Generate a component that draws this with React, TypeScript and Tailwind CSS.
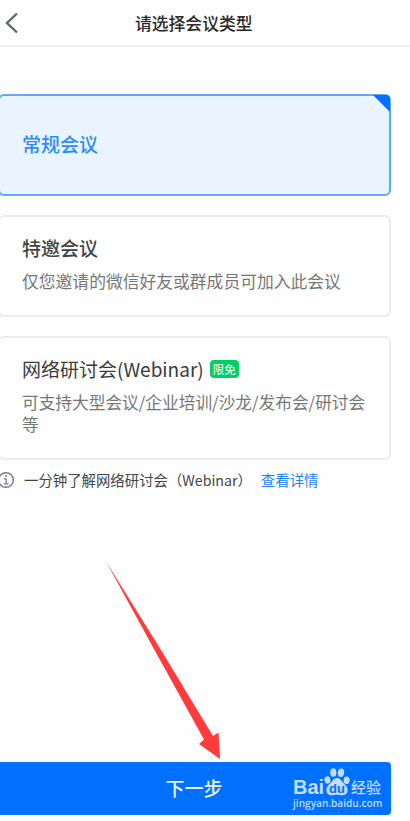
import type { ReactNode } from 'react'

function Card({ selected, className, children }: { selected?: boolean; className: string; children: ReactNode }) {
  return (
    <section
      className={`relative -ml-0.5 w-[393px] rounded-[6px] border-2 pl-[22px] ${
        selected ? 'border-[#62a9f6] bg-[#e9f4fe]' : 'border-[#ececec] bg-[#fefefe]'
      } ${className}`}
    >
      {children}
    </section>
  )
}

function Watermark() {
  return (
    <div className="absolute left-[293px] top-[4px] w-[92px] text-[#c3dcff]">
      <div className="flex h-[31px] items-end">
        <span className="w-[31px] font-['Liberation_Sans'] text-[20px] font-bold leading-[20px]">Bai</span>
        <svg width="26" height="30" viewBox="0 0 26 30" fill="#c3dcff" className="shrink-0">
          <ellipse cx="3.400" cy="13" rx="3" ry="3.700" transform="rotate(-12 3.400 13)" />
          <ellipse cx="9.300" cy="5.500" rx="3.100" ry="4.300" />
          <ellipse cx="17" cy="5.700" rx="3.100" ry="4.300" transform="rotate(10 17 5.700)" />
          <ellipse cx="22.600" cy="13.300" rx="3" ry="3.800" transform="rotate(8 22.600 13.300)" />
          <path d="M13 11c3 0 4.200 2.500 6 4.600 2.200 2.400 4.600 4 4.600 7.600 0 3.200-2.400 5-5.200 5-2 0-3.400-.5-5.400-.5s-3.400.5-5.400.5c-2.800 0-5.200-1.800-5.200-5 0-3.600 2.400-5.200 4.600-7.600C8.800 13.500 10 11 13 11z" />
          <text x="13" y="25.500" textAnchor="middle" fontSize="13" fontWeight="bold" fontFamily="Liberation Sans" fill="#0070ff">du</text>
        </svg>
        <span className="ml-px text-[15px] font-medium leading-[21px] whitespace-nowrap">经验</span>
      </div>
      <div className="font-['Open_Sans'] text-[10.100px] font-semibold leading-[12px]">jingyan.baidu.com</div>
    </div>
  )
}

export default function App() {
  return (
    <main className="relative flex h-[821px] w-[410px] flex-col overflow-hidden bg-[#fefefe] font-['Noto_Sans_CJK_SC',sans-serif] text-[#3a3a3a]">
      <header className="relative flex h-[47px] shrink-0 items-center border-b-2 border-[#f1f1f2]">
        <svg width="20" height="24" viewBox="0 0 20 24" fill="none" className="shrink-0">
          <path d="M17 2.500L7 12l10 9.500" stroke="#62666d" strokeWidth="2.400" />
        </svg>
        <h1 className="ml-[115px] mt-px text-[16.800px] font-medium leading-[24px] text-[#2a2a2a]">请选择会议类型</h1>
      </header>

      <Card selected className="mt-[47px] flex h-[102px] shrink-0 items-center">
        <h2 className="-mt-[3px] text-[19px] font-medium leading-[26px] text-[#2c8cf7]">常规会议</h2>
        <span className="absolute -right-px -top-px h-[17px] w-[17px] rounded-tr-[4px] bg-[#0070ff] [clip-path:polygon(0_0,100%_0,100%_100%)]" />
      </Card>

      <Card className="mt-[19px] h-[102px] shrink-0 pt-[18px]">
        <h2 className="text-[19px] font-medium leading-[26px] text-[#444]">特邀会议</h2>
        <p className="mt-[9px] text-[16.800px] leading-[22px] text-[#777]">仅您邀请的微信好友或群成员可加入此会议</p>
      </Card>

      <Card className="mt-[19px] h-[124px] shrink-0 pt-[18px]">
        <div className="flex items-center">
          <h2 className="text-[19px] leading-[26px]">网络研讨会(Webinar)</h2>
          <span className="ml-[6px] flex h-[18px] w-[29px] items-center justify-center rounded-[4px] bg-[#08cc68] text-[11.500px] leading-[18px] text-white">限免</span>
        </div>
        <p className="mt-[9px] text-[16.700px] leading-[22px] text-[#777]">
          可支持大型会议/企业培训/沙龙/发布会/研讨会
          <br />等
        </p>
      </Card>

      <div className="mt-[9px] flex h-[22px] shrink-0 items-center text-[14.400px] leading-[22px] text-[#444]">
        <svg width="16" height="18" viewBox="0 0 16 18" fill="none" stroke="#747d8c" className="shrink-0">
          <circle cx="6" cy="9" r="7.300" strokeWidth="1.500" />
          <path d="M4 7.800h2.200v5M3.800 12.800h4.800" strokeWidth="1.300" />
          <circle cx="6" cy="5" r="1" fill="#747d8c" stroke="none" />
        </svg>
        <span className="ml-2 whitespace-nowrap">一分钟了解网络研讨会（<span className="text-[14.200px]">Webinar</span>）</span>
        <a className="ml-[9px] whitespace-nowrap text-[#1b83f7]">查看详情</a>
      </div>

      <svg width="120" height="202" viewBox="0 0 120 202" className="pointer-events-none absolute left-[104px] top-[559px]">
        <path d="M2 2.500L57 91l52 86 5.500-3.500 1.500 26.500-21-15 5-4.500L50.500 91z" fill="#ff3b3b" />
      </svg>

      <div className="relative mt-auto mb-[6px] h-[53px] w-[391px] shrink-0 rounded-r-[4px] bg-[#0070ff]">
        <button className="flex h-full w-full items-center justify-center pr-[3px] text-[19px] font-medium text-[#e9f3ff]">下一步</button>
        <Watermark />
      </div>
    </main>
  )
}
